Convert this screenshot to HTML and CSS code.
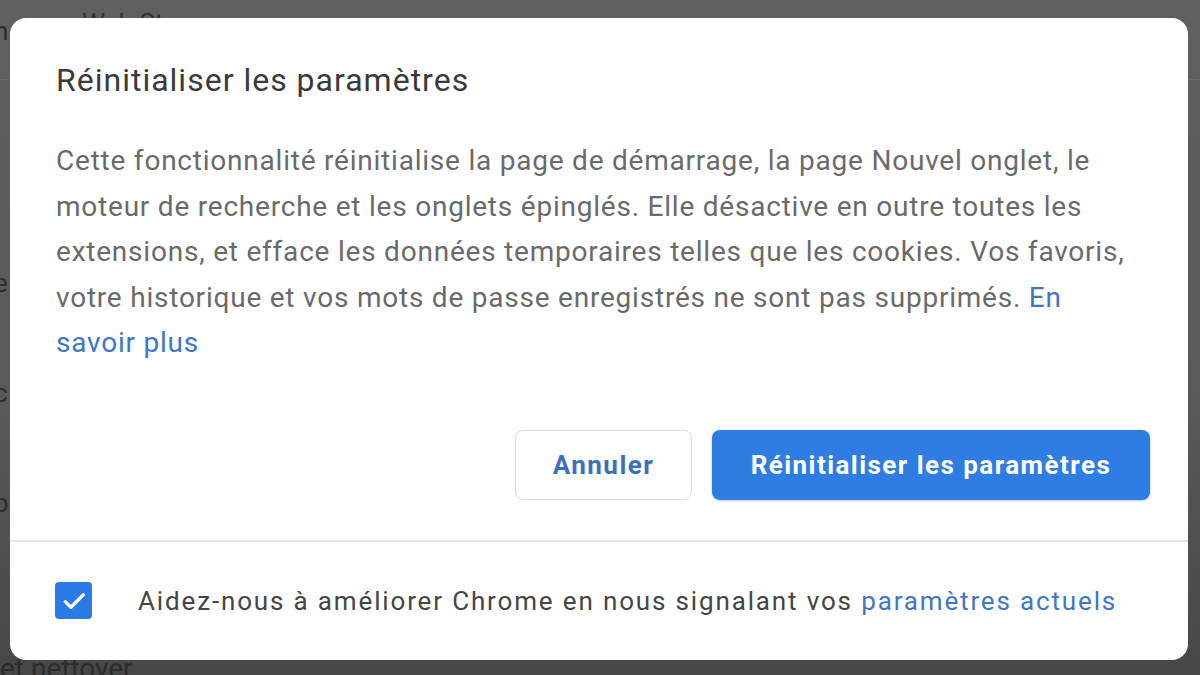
FILE: index.html
```html
<!DOCTYPE html>
<html lang="fr">
<head>
<meta charset="utf-8">
<title>Réinitialiser les paramètres</title>
<link rel="stylesheet" href="styles.css">
</head>
<body>
<div class="page">
  <div class="bg-top">Web Store</div>
  <div class="bg-row bg-h">h</div>
  <div class="bg-row bg-e">e</div>
  <div class="bg-row bg-c">c</div>
  <div class="bg-row bg-p">p</div>
  <div class="bg-bottom">et nettoyer</div>

  <div class="dialog" role="dialog">
    <h1 class="title">Réinitialiser les paramètres</h1>
    <p class="body">Cette fonctionnalité réinitialise la page de démarrage, la page Nouvel onglet, le moteur de recherche et les onglets épinglés. Elle désactive en outre toutes les extensions, et efface les données temporaires telles que les cookies. Vos favoris, votre historique et vos mots de passe enregistrés ne sont pas supprimés. <a class="link" href="#">En savoir plus</a></p>
    <div class="actions">
      <button class="btn btn-cancel">Annuler</button>
      <button class="btn btn-primary">Réinitialiser les paramètres</button>
    </div>
    <div class="footer">
      <span class="checkbox">
        <svg viewBox="0 0 24 24" width="30" height="30"><path d="M5 12.5l4.5 4.5L19.5 7" fill="none" stroke="#fff" stroke-width="2.6" stroke-linecap="round" stroke-linejoin="round"/></svg>
      </span>
      <span class="footer-text">Aidez-nous à améliorer Chrome en nous signalant vos <a class="link" href="#">paramètres actuels</a></span>
    </div>
  </div>
</div>
</body>
</html>
```
FILE: styles.css
```css
* { box-sizing: border-box; }
html, body { margin: 0; padding: 0; }
body {
  width: 1200px;
  height: 675px;
  overflow: hidden;
  background: linear-gradient(#606060, #595959 60%, #474747);
  font-family: Roboto, "Liberation Sans", sans-serif;
}
.page {
  position: relative;
  width: 1200px;
  height: 675px;
  display: flex;
  flex-direction: column;
}
.bg-top {
  height: 18px;
  padding-left: 82px;
  color: #333;
  font-size: 26px;
  line-height: 46px;
  overflow: hidden;
}
.bg-row {
  color: #2e2e2e;
  font-size: 26px;
  line-height: 26px;
  margin-left: -6px;
}
.bg-h { margin-top: 0; height: 62px; border-bottom: 1px solid #6a6a6a; }
.bg-e { margin-top: 190px; }
.bg-c { margin-top: 84px; }
.bg-p { margin-top: 84px; }
.bg-bottom {
  margin-top: auto;
  color: #2c2c2c;
  font-size: 28px;
  line-height: 20px;
  height: 16px;
}

.dialog {
  position: absolute;
  left: 10px;
  top: 18px;
  width: 1178px;
  height: 642px;
  background: #fff;
  border-radius: 16px;
  display: flex;
  flex-direction: column;
}
.title {
  margin: 0;
  padding: 42px 38px 0 46px;
  font-weight: 400;
  font-size: 32px;
  line-height: 40px;
  letter-spacing: 1px;
  color: #3a3a3a;
}
.body {
  margin: 0;
  padding: 38px 52px 0 46px;
  font-size: 28px;
  line-height: 45.5px;
  color: #6a6a6a;
  letter-spacing: 0.78px;
}
.link {
  color: #4076c6;
  text-decoration: none;
}
.actions {
  display: flex;
  justify-content: flex-end;
  gap: 20px;
  padding: 0 38px 0 46px;
  margin-top: 64px;
}
.btn {
  height: 70px;
  border-radius: 8px;
  font-family: Roboto, "Liberation Sans", sans-serif;
  font-size: 26px;
  font-weight: 700;
  letter-spacing: 1.45px;
  cursor: pointer;
}
.btn-cancel {
  width: 177px;
  background: #fff;
  border: 1.5px solid #dcdcdc;
  color: #3b6fbd;
}
.btn-primary {
  width: 438px;
  background: #2f7de3;
  border: none;
  color: #fff;
  box-shadow: 0 1px 3px rgba(47,125,227,0.35);
}
.footer {
  margin-top: 40px;
  border-top: 2px solid #e6e6e6;
  flex: 1;
  display: flex;
  align-items: center;
  padding: 0 30px 0 45px;
}
.checkbox {
  width: 37px;
  height: 37px;
  border-radius: 4px;
  background: #2b7be6;
  display: flex;
  align-items: center;
  justify-content: center;
  flex: none;
}
.footer-text {
  margin-left: 46px;
  font-size: 26px;
  color: #454545;
  letter-spacing: 1.85px;
}
```
